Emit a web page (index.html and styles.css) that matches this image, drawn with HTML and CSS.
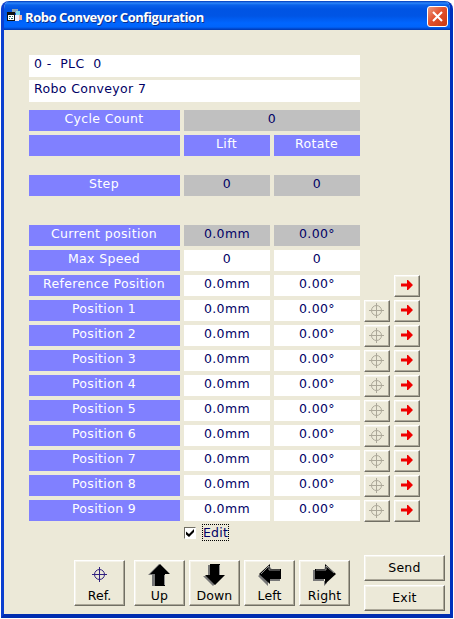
FILE: index.html
```html
<!DOCTYPE html>
<html lang="en">
<head>
<meta charset="utf-8">
<title>Robo Conveyor Configuration</title>
<link rel="stylesheet" href="styles.css">
</head>
<body>
<svg class="defs" width="0" height="0" aria-hidden="true">
  <symbol id="target" viewBox="0 0 15 15"><path d="M7.5 0v15M0 7.5h15" /><circle cx="7.5" cy="7.5" r="5" /></symbol>
  <symbol id="go" viewBox="0 0 12 10"><path d="M0 3.5h6V0h1l5 5-5 5H6V6.500H0z" /></symbol>
</svg>
<div class="window">
  <header class="titlebar">
    <svg class="appicon" width="16" height="14" viewBox="0 0 16 14"><path fill="#8aa0b0" d="M5 0h6v4H5z"/><path fill="#7fd8e8" d="M9 2h4v4H9z"/><path fill="#f4b7a4" d="M11 6h4v5h-4z"/><path fill="#eef" d="M6 6h6v6H6z"/><path fill="#111" d="M0 3h8v9H0z"/><path fill="#fff" d="M1 6h6v5H1z"/><path fill="#23686a" d="M2 7h2v1H2zM5 7h1v1H5zM2 9h1v1H2zM4 9h2v1H4z"/></svg>
    <h1>Robo Conveyor Configuration</h1>
    <button class="close" aria-label="Close"><svg width="11" height="11" viewBox="0 0 11 11"><path d="M1 1l9 9M10 1l-9 9" stroke="#fff" stroke-width="2.1"/></svg></button>
  </header>
  <main class="client">
    <div class="names"><div class="name">0 -&nbsp; PLC&nbsp; 0</div><div class="name">Robo Conveyor 7</div></div>
    <div class="rows">
      <div class="row"><b>Cycle Count</b><i class="gray wide">0</i></div>
      <div class="row"><b></b><b>Lift</b><b>Rotate</b></div>
      <div class="row step"><b>Step</b><i class="gray">0</i><i class="gray">0</i></div>
      <div class="row current"><b>Current position</b><i class="gray">0.0mm</i><i class="gray">0.00°</i></div>
      <div class="row"><b>Max Speed</b><i>0</i><i>0</i></div>
      <div class="row"><b>Reference Position</b><i>0.0mm</i><i>0.00°</i><span></span><button><svg class="go"><use href="#go"/></svg></button></div>
      <div class="row"><b>Position 1</b><i>0.0mm</i><i>0.00°</i><button><svg class="aim"><use href="#target"/></svg></button><button><svg class="go"><use href="#go"/></svg></button></div>
      <div class="row"><b>Position 2</b><i>0.0mm</i><i>0.00°</i><button><svg class="aim"><use href="#target"/></svg></button><button><svg class="go"><use href="#go"/></svg></button></div>
      <div class="row"><b>Position 3</b><i>0.0mm</i><i>0.00°</i><button><svg class="aim"><use href="#target"/></svg></button><button><svg class="go"><use href="#go"/></svg></button></div>
      <div class="row"><b>Position 4</b><i>0.0mm</i><i>0.00°</i><button><svg class="aim"><use href="#target"/></svg></button><button><svg class="go"><use href="#go"/></svg></button></div>
      <div class="row"><b>Position 5</b><i>0.0mm</i><i>0.00°</i><button><svg class="aim"><use href="#target"/></svg></button><button><svg class="go"><use href="#go"/></svg></button></div>
      <div class="row"><b>Position 6</b><i>0.0mm</i><i>0.00°</i><button><svg class="aim"><use href="#target"/></svg></button><button><svg class="go"><use href="#go"/></svg></button></div>
      <div class="row"><b>Position 7</b><i>0.0mm</i><i>0.00°</i><button><svg class="aim"><use href="#target"/></svg></button><button><svg class="go"><use href="#go"/></svg></button></div>
      <div class="row"><b>Position 8</b><i>0.0mm</i><i>0.00°</i><button><svg class="aim"><use href="#target"/></svg></button><button><svg class="go"><use href="#go"/></svg></button></div>
      <div class="row"><b>Position 9</b><i>0.0mm</i><i>0.00°</i><button><svg class="aim"><use href="#target"/></svg></button><button><svg class="go"><use href="#go"/></svg></button></div>
    </div>
    <div class="edit"><span class="check"><svg width="8" height="8" viewBox="0 0 8 8"><path d="M0 2.500l3 2.500L8 0v3L3 8 0 5.500z"/></svg></span><span class="focus">Edit</span></div>
    <footer class="actions">
      <button class="big ref"><svg class="target"><use href="#target"/></svg>Ref.</button>
      <button class="big"><svg class="arrow" viewBox="0 0 24 24"><path class="shade" d="M11 1L0 12h4v11h12V12z"/><path d="M12 1l10 10h-5v12H7V11H2z"/><path class="shine" d="M16.500 12v10"/></svg>Up</button>
      <button class="big"><svg class="arrow" viewBox="0 0 24 24"><path class="shade" d="M5 2v11H0l10 10 2-2V2z"/><path d="M7 1v11H2l10 10 10-10h-5V1z"/><path class="shine" d="M16.500 2v10"/></svg>Down</button>
      <button class="big"><svg class="arrow" viewBox="0 0 24 24"><path class="shade" d="M0 13l10 10v-5h12v-2L12 4z"/><path d="M1 11L12 1v5h11v10H12v5z"/><path class="shine" d="M3 11l8-8V7h11"/></svg>Left</button>
      <button class="big"><svg class="arrow" viewBox="0 0 24 24"><path class="shade" d="M0 7h12v11H0zM11 3v20l3-3z"/><path d="M2 6h10V1l11 10-11 10v-5H2z"/><path class="shine" d="M3 7h10V3l8 7"/></svg>Right</button>
      <div class="commands"><button>Send</button><button>Exit</button></div>
    </footer>
  </main>
</div>
</body>
</html>
```
FILE: styles.css
```css
* { box-sizing: border-box; }
html, body { margin: 0; background: #fff; }
body { width: 454px; height: 619px; padding: 1px; overflow: hidden; font: 12.5px/18px "DejaVu Sans", sans-serif; }
.defs { display: block; position: absolute; }
.window { width: 452px; height: 617px; border: solid #0a3fd0; border-width: 0 3px 4px; border-radius: 8px 8px 0 0; background: #ece9d8; overflow: hidden; border-right-color: #0030bc; border-bottom-color: #002db0; }
.titlebar { height: 29px; margin: 0 -3px; padding: 1px 5px 0 6px; display: flex; align-items: center; background: linear-gradient(#0038b8 0, #2c86fa 2px, #0a62ea 4px, #0054e3 8px, #0055e5 15px, #0066ff 22px, #0064fb 26px, #0045c8 28px, #0038b0 29px); }
.appicon { display: block; }
h1 { flex: 1; margin: 1px 0 0 2px; color: #fff; font: bold 13px/20px "Open Sans", sans-serif; letter-spacing: -.44px; text-shadow: 1px 1px #0a2f8c; white-space: nowrap; }
.close { width: 21px; height: 21px; padding: 0; border: 1px solid #fff; border-radius: 3px; background: linear-gradient(135deg, #ec9a80, #e2512e 45%, #c93a10); display: grid; place-items: center; }
.client { padding: 25px 0 0 25px; }
.names { display: grid; gap: 3px; width: 331px; }
.name { height: 22px; padding-left: 5px; background: #fff; color: #000066; white-space: pre; letter-spacing: .36px; }
.rows { margin-top: 8px; display: grid; gap: 4px; }
.row { display: grid; grid-template: 21px / 151px 86px 86px 26px 26px; gap: 4px; height: 21px; }
.row.step { margin-top: 15px; }
.row.current { margin-top: 25px; }
.row b, .row i { font-weight: normal; font-style: normal; text-align: center; white-space: nowrap; letter-spacing: .36px; }
.row b { background: #8080ff; color: #fff; padding-right: 1px; }
.row i { background: #fff; color: #000066; }
.row .gray { background: #c0c0c0; }
.row .wide { grid-column: span 2; }
button { font: inherit; color: #000; }
.row button, .big, .commands button { padding: 0; border: 1px solid; border-color: #fff #716f64 #716f64 #fff; background: #ece9d8; box-shadow: inset -1px -1px #aca899, inset 1px 1px #f5f3ea; }
.row button { display: grid; place-items: center; width: 26px; height: 22px; padding: 0 1px 2px 0; }
.go { width: 12px; height: 10px; fill: #f00000; }
.aim, .target { width: 15px; height: 15px; fill: none; stroke: #aca899; stroke-width: 1; }
.target { stroke: #302080; margin: 0 0 5px; }
.edit { display: flex; align-items: center; height: 17px; margin: 3px 0 0 155px; color: #000066; }
.check { width: 12px; height: 12px; border: 1px solid; border-color: #716f64 #fff #fff #716f64; background: #fff; display: grid; place-items: center; }
.focus { margin-left: 6px; height: 17px; line-height: 15px; border: 1px dotted #000; letter-spacing: .2px; }
.actions { display: flex; margin: 14px 0 0 45px; height: 57px; align-items: flex-start; gap: 4px; }
.big { width: 51px; height: 46px; margin-top: 5px; display: flex; flex-direction: column; align-items: center; justify-content: flex-end; letter-spacing: .1px; }
.big.ref { margin-right: 5px; }
.arrow { width: 24px; height: 24px; }
.shade { fill: #777; }
.shine { fill: none; stroke: #ccc; stroke-width: .7; }
.commands { display: grid; gap: 4px; margin-left: 10px; }
.commands button { width: 81px; height: 26px; letter-spacing: .2px; }
```
